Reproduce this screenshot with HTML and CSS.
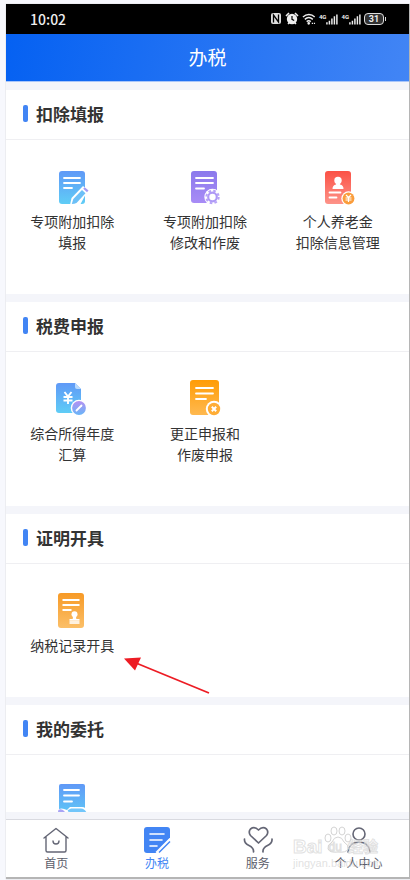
FILE: index.html
```html
<!DOCTYPE html>
<html lang="zh-CN">
<head>
    <meta charset="UTF-8">
    <meta name="viewport" content="width=device-width, initial-scale=1.0">
    <title>办税</title>
    <link rel="stylesheet" href="styles.css">
</head>
<body>
    <!-- shared gradients -->
    <svg class="defs" aria-hidden="true">
        <defs>
            <linearGradient id="blue" x1="0" y1="0" x2="0" y2="1"><stop offset="0" stop-color="#6099f7"/><stop offset="1" stop-color="#5fcdf6"/></linearGradient>
            <linearGradient id="purple" x1="0" y1="0" x2="0" y2="1"><stop offset="0" stop-color="#8b79ec"/><stop offset="1" stop-color="#a88cf6"/></linearGradient>
            <linearGradient id="red" x1="0" y1="0" x2="0" y2="1"><stop offset="0" stop-color="#fb5145"/><stop offset="1" stop-color="#fd9389"/></linearGradient>
            <linearGradient id="orange" x1="0" y1="0" x2="0" y2="1"><stop offset="0" stop-color="#ff9c06"/><stop offset="1" stop-color="#ffb950"/></linearGradient>
            <linearGradient id="amber" x1="0" y1="0" x2="0" y2="1"><stop offset="0" stop-color="#f79a26"/><stop offset="1" stop-color="#fbbf68"/></linearGradient>
            <linearGradient id="violet" x1="0" y1="0" x2="0" y2="1"><stop offset="0" stop-color="#b591f2"/><stop offset="1" stop-color="#68b5f8"/></linearGradient>
        </defs>
    </svg>

    <div class="phone">
        <div class="status-bar">
            <span class="time">10:02</span>
            <div class="status-icons">
                <svg width="12" height="14" viewBox="0 0 12 14"><rect x="1" y="1" width="10" height="11" rx="2" fill="#ddd"/><path d="M3.5 10.5V3l5 7V2.5" fill="none" stroke="#000" stroke-width="1.3"/></svg>
                <svg width="14" height="14" viewBox="0 0 14 14"><circle cx="7" cy="7" r="5.2" fill="#eee"/><path d="M1 4L4 1M13 4L10 1M3 12l1.5-1.5M11 12l-1.5-1.5" stroke="#eee" stroke-width="1.6"/><path d="M7 4v3.3l2.2 1.2" fill="none" stroke="#000" stroke-width="1.2"/></svg>
                <svg width="14" height="14" viewBox="0 0 15 14" fill="none" stroke="#eee" stroke-width="1.5"><path d="M1 4.8c3.8-3.6 9-3.6 12.6 0M3 7.4c2.6-2.4 6-2.4 8.6 0M5 9.8c1.4-1.2 3-1.2 4.4 0"/><circle cx="7.2" cy="11.6" r=".7" fill="#eee"/><path d="M10.5 11.7h1.3M12.7 11.7H14"/></svg>
                <span class="signal"><small>4G</small><svg width="12" height="12" viewBox="0 0 13 12" stroke="#eee" stroke-width="1.6"><path d="M1 12V9.5M3.7 12V8M6.4 12V5.5M9.1 12V3M11.8 12V1"/></svg></span>
                <span class="signal"><small>4G</small><svg width="12" height="12" viewBox="0 0 13 12" stroke="#eee" stroke-width="1.6"><path d="M1 12V9.5M3.7 12V8M6.4 12V5.5M9.1 12V3M11.8 12V1"/></svg></span>
                <span class="battery">31</span>
            </div>
        </div>

        <header class="header">
            <h1>办税</h1>
        </header>

        <main class="content">
            <section class="card">
                <h2>扣除填报</h2>
                <div class="menu">
                    <a href="#" class="item">
                        <svg width="36" height="36" viewBox="0 0 36 36">
                            <rect x="5" y="1" width="26" height="33" rx="3" fill="url(#blue)"/>
                            <path d="M10 8h16M10 13h16M10 18h8" stroke="#fff" stroke-width="1.8" stroke-linecap="round"/>
                            <path d="M16 35l1.500-7L29 16l5 4-8 15z" fill="#fff"/>
                            <path d="M17.800 34l1.500-5L28 20l3.500 3.200L22.500 33q-2 1-4.700 1z" fill="#6cc0f7"/>
                            <path d="M29.200 18.800l1.500-1.600 3.800 3.300-1.500 1.800z" fill="#a49bf3"/>
                        </svg>
                        <span>专项附加扣除<br>填报</span>
                    </a>
                    <a href="#" class="item">
                        <svg width="36" height="36" viewBox="0 0 36 36">
                            <rect x="4" y="1" width="26" height="32" rx="3" fill="url(#purple)"/>
                            <path d="M9 8h17M9 13h17M9 18.500h8" stroke="#fff" stroke-width="1.8" stroke-linecap="round"/>
                            <circle cx="25.500" cy="27" r="8.200" fill="#fff"/>
                            <circle cx="25.500" cy="27" r="6.200" fill="none" stroke="#b7a2f7" stroke-width="2" stroke-dasharray="2.600 2.270"/>
                            <circle cx="25.500" cy="27" r="4.300" fill="none" stroke="#ae99f6" stroke-width="2.200"/>
                        </svg>
                        <span>专项附加扣除<br>修改和作废</span>
                    </a>
                    <a href="#" class="item">
                        <svg width="36" height="36" viewBox="0 0 36 36">
                            <rect x="5" y="1" width="26" height="33" rx="3" fill="url(#red)"/>
                            <circle cx="18" cy="10.500" r="3.700" fill="#fff"/>
                            <path d="M16.500 12h3l.5 2.500q3.500.5 3.500 4.500h-11q0-4 3.500-4.500z" fill="#fff"/>
                            <path d="M9.500 22.500h11M9.500 27.500h7" stroke="#fff" stroke-width="1.800" stroke-linecap="round"/>
                            <circle cx="28.500" cy="28.500" r="7.200" fill="#fff"/>
                            <circle cx="28.500" cy="28.500" r="5.900" fill="#fa9d3c"/>
                            <path d="M26 25l2.500 2.500L31 25M25.500 28h6M25.500 30h6M28.500 27.500V32" fill="none" stroke="#fff" stroke-width="1.200"/>
                        </svg>
                        <span>个人养老金<br>扣除信息管理</span>
                    </a>
                </div>
            </section>

            <section class="card">
                <h2>税费申报</h2>
                <div class="menu">
                    <a href="#" class="item">
                        <svg width="36" height="36" viewBox="0 0 36 36">
                            <path d="M5 1h16l6 6v24H5q-3 0-3-3V4q0-3 3-3z" fill="url(#blue)"/>
                            <path d="M21 1l6 6h-4q-2 0-2-2z" fill="#b9dafd"/>
                            <path d="M10.500 10l3.500 4.500 3.500-4.500M9.500 15h9M9.500 18.500h9M14 14.500v7.500" fill="none" stroke="#fff" stroke-width="1.900"/>
                            <circle cx="25" cy="26" r="8.300" fill="#fff"/>
                            <circle cx="25" cy="26" r="6.900" fill="url(#violet)"/>
                            <path d="M22.500 28.500l5-5" stroke="#fff" stroke-width="1.800" stroke-linecap="round"/>
                        </svg>
                        <span>综合所得年度<br>汇算</span>
                    </a>
                    <a href="#" class="item">
                        <svg width="36" height="36" viewBox="0 0 36 36">
                            <rect x="3" y="-2" width="29" height="35" rx="3" fill="url(#orange)"/>
                            <path d="M9 6h17M9 11.500h17M9 17h10" stroke="#fff" stroke-width="1.800" stroke-linecap="round"/>
                            <circle cx="27" cy="27" r="8.200" fill="#fff"/>
                            <circle cx="27" cy="27" r="6.200" fill="#ffad35"/>
                            <path d="M24.800 24.800l4.400 4.400M29.200 24.800l-4.400 4.400" stroke="#fff" stroke-width="2"/>
                        </svg>
                        <span>更正申报和<br>作废申报</span>
                    </a>
                </div>
            </section>

            <section class="card">
                <h2>证明开具</h2>
                <div class="menu">
                    <a href="#" class="item">
                        <svg width="36" height="36" viewBox="0 0 36 36">
                            <rect x="4" y="-1" width="26" height="35" rx="3" fill="url(#amber)"/>
                            <path d="M8.500 6h17M8.500 11h17M8.500 16h9" stroke="#fff" stroke-width="1.800"/>
                            <circle cx="20.500" cy="20.300" r="3" fill="#fff"/>
                            <path d="M19.200 21h2.600l.5 4h3.200v1.500H15.500V25h3.200z" fill="#fff"/>
                            <path d="M15.500 26.500h10V30h-10z" fill="#fff" opacity=".8"/>
                        </svg>
                        <span>纳税记录开具</span>
                    </a>
                </div>
                <svg class="arrow" width="88" height="40" viewBox="0 0 88 40" aria-hidden="true">
                    <path d="M12 6l73 30" stroke="#ed1c24" stroke-width="1.800"/>
                    <path d="M0 1.500L17 .5 11 13.500z" fill="#ed1c24"/>
                </svg>
            </section>

            <section class="card">
                <h2>我的委托</h2>
                <div class="menu">
                    <a href="#" class="item" aria-label="我的委托">
                        <svg width="36" height="36" viewBox="0 0 36 36">
                            <rect x="5" y="-1" width="26" height="34" rx="2" fill="url(#blue)"/>
                            <path d="M10 5h15M10 10.500h15M10 16.500h8" stroke="#fff" stroke-width="1.800" stroke-linecap="round"/>
                            <path d="M3 36V25q4-3 10 0l3-3h12q4 0 6 5v9z" fill="#fff"/>
                            <path d="M4 27q0-4 5-2l3 3v5H6z" fill="#a9a4f5"/>
                            <path d="M14 25l3-1.500h10q4 0 6 5l-3 5-6-6-8-.5q-3 0-2-2z" fill="#72c6fa"/>
                        </svg>
                    </a>
                </div>
            </section>
        </main>

        <nav class="tabbar">
            <a href="#" class="tab">
                <svg width="28" height="28" viewBox="0 0 28 28" fill="none" stroke="#646675" stroke-width="1.400" stroke-linejoin="round" stroke-linecap="round"><path d="M2 12L14 2.500 26 12M4 10.500V24.500q0 1.500 1.500 1.500h17q1.500 0 1.500-1.500V10.500M11 15q0 3 3 3t3-3"/></svg>
                <span>首页</span>
            </a>
            <a href="#" class="tab active">
                <svg width="28" height="28" viewBox="0 0 28 28"><path d="M4 1h20q3 0 3 3v8L13 27H4q-3 0-3-3V4q0-3 3-3z" fill="#4285f4"/><path d="M7 8h14M7 14h12M7 20h7" stroke="#fff" stroke-width="1.600" stroke-linecap="round"/><path d="M27 12.500L13 26.500" stroke="#fff" stroke-width="1.500"/><path d="M27 15.500L16 26.500" stroke="#4285f4" stroke-width="1.500"/></svg>
                <span>办税</span>
            </a>
            <a href="#" class="tab">
                <svg width="30" height="28" viewBox="0 0 30 28" fill="none" stroke="#646675" stroke-width="1.700" stroke-linecap="round" stroke-linejoin="round"><path d="M15.500 17L7.500 9.500Q5 6 7.500 3q4-3 8 1 4-4 8-1 2.500 3 0 6.500zM1.500 13q-.5 4 4.500 6.500T10.500 26M29 13q.5 4-4.500 6.500T20 26"/></svg>
                <span>服务</span>
            </a>
            <a href="#" class="tab">
                <svg width="28" height="28" viewBox="0 0 28 28" fill="none" stroke="#646675" stroke-width="1.600" stroke-linecap="round"><circle cx="14" cy="8" r="6"/><path d="M3 26q1-9.500 11-10 10 .5 11 10"/></svg>
                <span>个人中心</span>
            </a>
            <div class="watermark" aria-hidden="true">
                <svg width="28" height="28" viewBox="0 0 28 28" fill="none" stroke="#d4d4d4"><ellipse cx="4" cy="12" rx="3" ry="4"/><ellipse cx="10" cy="5" rx="3" ry="4"/><ellipse cx="18" cy="5" rx="3" ry="4"/><ellipse cx="24" cy="12" rx="3" ry="4"/><path d="M14 11q4 0 6 5 5 3 4 7-2 4-10 3-8 1-10-3-1-4 4-7 2-5 6-5z"/></svg>
                <div class="brand"><b>Bai</b><i>du</i><b class="cn">经验</b></div>
                <div class="site">jingyan.baidu.com</div>
            </div>
        </nav>
    </div>
</body>
</html>
```
FILE: styles.css
```css
* {
    box-sizing: border-box;
}
body {
    margin: 0;
    height: 100vh;
    padding: 4px 1px 3px 6px;
    background-color: #f7f8fd;
    font-family: "Noto Sans CJK SC", "Noto Sans", sans-serif;
    color: #333;
}
a {
    color: inherit;
    text-decoration: none;
}
svg {
    display: block;
    overflow: visible;
}
.defs {
    position: absolute;
    width: 0;
    height: 0;
}
.phone {
    display: flex;
    flex-direction: column;
    height: 100%;
    background-color: #f4f5fa;
    box-shadow: 1px 1px 1px 1px #b5b5b5;
}
.status-bar {
    display: flex;
    align-items: center;
    justify-content: space-between;
    flex: none;
    height: 30px;
    padding: 0 25px 0 24px;
    background-color: #000;
    color: #eee;
}
.time {
    font-size: 14px;
    font-weight: 500;
}
.status-icons {
    display: flex;
    align-items: center;
    gap: 3px;
}
.signal {
    display: flex;
    align-items: flex-start;
}
.signal small {
    font: bold 6px/7px Roboto, sans-serif;
}
.battery {
    position: relative;
    width: 20px;
    height: 12px;
    border: 1px solid #ddd;
    border-radius: 4px;
    background-color: #333;
    font: bold 9px/10px Roboto, sans-serif;
    text-align: center;
}
.battery::after {
    content: "";
    position: absolute;
    right: -3px;
    top: 3px;
    width: 1px;
    height: 4px;
    background-color: #ddd;
}
.header {
    flex: none;
    height: 48px;
    border-bottom: 1px solid #a9c6fa;
    background: linear-gradient(100deg, #0561f2, #4285f5);
    color: #fff;
    text-align: center;
}
.header h1 {
    margin: 0;
    font-size: 19px;
    font-weight: 400;
    line-height: 45px;
}
.content {
    display: flex;
    flex-direction: column;
    gap: 8px;
    flex: 1;
    min-height: 0;
    margin: 8px 0 7px;
    overflow: hidden;
}
.card {
    position: relative;
    flex: none;
    background-color: #fff;
}
.card h2 {
    display: flex;
    align-items: center;
    gap: 8px;
    height: 50px;
    margin: 0;
    padding: 0 0 2px 17px;
    border-bottom: 1px solid #efeff2;
    font-size: 17px;
    font-weight: 700;
}
.card h2::before {
    content: "";
    width: 5px;
    height: 17px;
    border-radius: 2px;
    background-color: #4285f4;
}
.menu {
    display: grid;
    grid-template-columns: repeat(3, 1fr);
    padding: 30px 5px 41px 0;
}
.item {
    display: flex;
    flex-direction: column;
    align-items: center;
    gap: 5px;
    font-size: 14px;
    line-height: 21px;
    text-align: center;
}
.arrow {
    position: absolute;
    left: 118px;
    top: 143px;
}
.tabbar {
    position: relative;
    display: flex;
    flex: none;
    height: 58px;
    border-top: 1px solid #d9dae0;
    background-color: #fff;
}
.tab {
    display: flex;
    flex-direction: column;
    align-items: center;
    flex: 1;
    padding-top: 6px;
    color: #5c5e6b;
    font-size: 12px;
    line-height: 17px;
}
.tab.active {
    color: #4285f4;
}
/* site mark printed over the tab bar */
.watermark {
    position: absolute;
    right: 28px;
    top: 17px;
    width: 88px;
    color: rgba(255, 255, 255, 0.5);
    font-family: Arial, "Liberation Sans", "Noto Sans CJK SC", sans-serif;
    -webkit-text-stroke: 1px rgba(205, 205, 205, 0.6);
    pointer-events: none;
}
.watermark svg {
    position: absolute;
    left: 31px;
    top: -11px;
}
.brand {
    position: relative;
    display: flex;
    align-items: center;
    gap: 6px;
    font-size: 19px;
    line-height: 20px;
}
.brand i {
    font-size: 12px;
    font-style: normal;
}
.brand .cn {
    font-size: 15px;
}
.site {
    position: relative;
    font-size: 11px;
    line-height: 12px;
    color: rgba(205, 205, 205, 0.6);
    -webkit-text-stroke: 0;
}
```
